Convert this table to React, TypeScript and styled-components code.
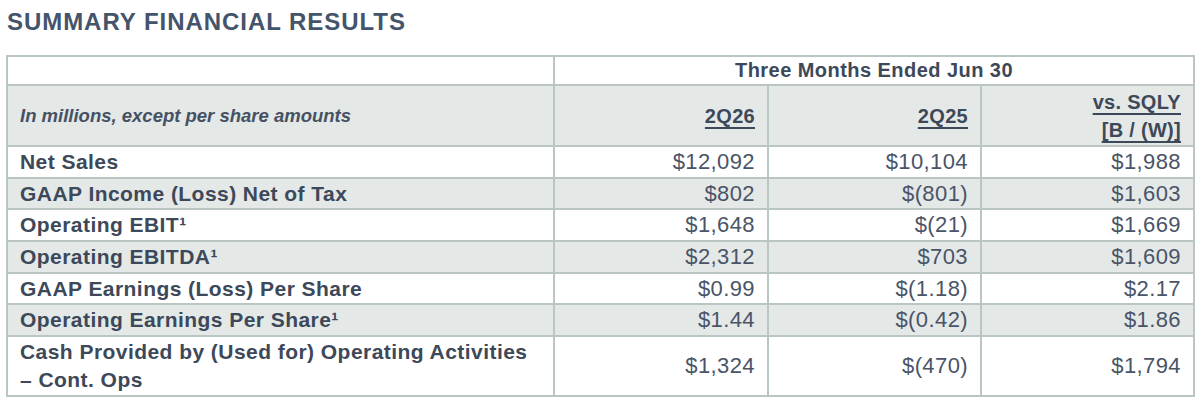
import React from 'react'
import styled, { createGlobalStyle } from 'styled-components'

const GlobalStyle = createGlobalStyle`
  html, body {
    margin: 0;
    padding: 0;
    background: #ffffff;
  }
  body {
    font-family: 'Liberation Sans', Arial, sans-serif;
  }
`

const Page = styled.div`
  width: 1197px;
  padding: 8px 0 0 6px;
  box-sizing: border-box;
`

const Title = styled.h2`
  margin: 0 0 19px 1px;
  height: 28px;
  font-size: 24px;
  line-height: 28px;
  font-weight: 700;
  letter-spacing: 0.95px;
  color: #44546a;
`

const Table = styled.table`
  width: 1187px;
  border-collapse: collapse;
  table-layout: fixed;
  color: #3f4a5b;
`

const Row = styled.tr<{ $shaded?: boolean; $h: number }>`
  height: ${(p) => p.$h}px;
  background: ${(p) => (p.$shaded ? '#e4e8e7' : '#ffffff')};
`

const Cell = styled.td`
  border: 2px solid #bac6c2;
  padding: 0 12px;
  vertical-align: middle;
  white-space: nowrap;
`

const Label = styled(Cell)`
  font-size: 21px;
  line-height: 28px;
  font-weight: 700;
  letter-spacing: 0.45px;
  color: #3d4859;
`

const Note = styled(Cell)`
  font-size: 18.5px;
  font-style: italic;
  font-weight: 700;
  letter-spacing: 0;
  color: #465163;
`

const Value = styled(Cell)`
  text-align: right;
  font-size: 22px;
  line-height: 28px;
  letter-spacing: 0.4px;
  color: #4a5467;
`

const PeriodHead = styled(Cell)`
  text-align: center;
  font-size: 20px;
  font-weight: 700;
  letter-spacing: 0.45px;
  color: #3d4859;
`

const ColHead = styled(Cell)`
  text-align: right;
  font-size: 20px;
  line-height: 28px;
  font-weight: 700;
  letter-spacing: 0.3px;
  color: #3d4859;
`

const Under = styled.span`
  text-decoration: underline;
  text-decoration-thickness: 2px;
  text-underline-offset: 4px;
  text-decoration-skip-ink: none;
`

type Line = {
  label: React.ReactNode
  cur: string
  prev: string
  diff: string
  h: number
}

const rows: Line[] = [
  { label: 'Net Sales', cur: '$12,092', prev: '$10,104', diff: '$1,988', h: 32 },
  { label: 'GAAP Income (Loss) Net of Tax', cur: '$802', prev: '$(801)', diff: '$1,603', h: 31 },
  { label: 'Operating EBIT¹', cur: '$1,648', prev: '$(21)', diff: '$1,669', h: 32 },
  { label: 'Operating EBITDA¹', cur: '$2,312', prev: '$703', diff: '$1,609', h: 32 },
  { label: 'GAAP Earnings (Loss) Per Share', cur: '$0.99', prev: '$(1.18)', diff: '$2.17', h: 31 },
  { label: 'Operating Earnings Per Share¹', cur: '$1.44', prev: '$(0.42)', diff: '$1.86', h: 32 },
  {
    label: (
      <>
        Cash Provided by (Used for) Operating Activities
        <br />– Cont. Ops
      </>
    ),
    cur: '$1,324',
    prev: '$(470)',
    diff: '$1,794',
    h: 60,
  },
]

export default function App() {
  return (
    <Page>
      <GlobalStyle />
      <Title>SUMMARY FINANCIAL RESULTS</Title>
      <Table>
        <colgroup>
          <col style={{ width: 547 }} />
          <col style={{ width: 214 }} />
          <col style={{ width: 213 }} />
          <col style={{ width: 213 }} />
        </colgroup>
        <tbody>
          <Row $h={29}>
            <Cell />
            <PeriodHead colSpan={3}>Three Months Ended Jun 30</PeriodHead>
          </Row>
          <Row $h={61} $shaded>
            <Note>In millions, except per share amounts</Note>
            <ColHead>
              <Under>2Q26</Under>
            </ColHead>
            <ColHead>
              <Under>2Q25</Under>
            </ColHead>
            <ColHead>
              <Under>vs. SQLY</Under>
              <br />
              <Under>[B / (W)]</Under>
            </ColHead>
          </Row>
          {rows.map((r, i) => (
            <Row key={i} $h={r.h} $shaded={i % 2 === 1}>
              <Label>{r.label}</Label>
              <Value>{r.cur}</Value>
              <Value>{r.prev}</Value>
              <Value>{r.diff}</Value>
            </Row>
          ))}
        </tbody>
      </Table>
    </Page>
  )
}
